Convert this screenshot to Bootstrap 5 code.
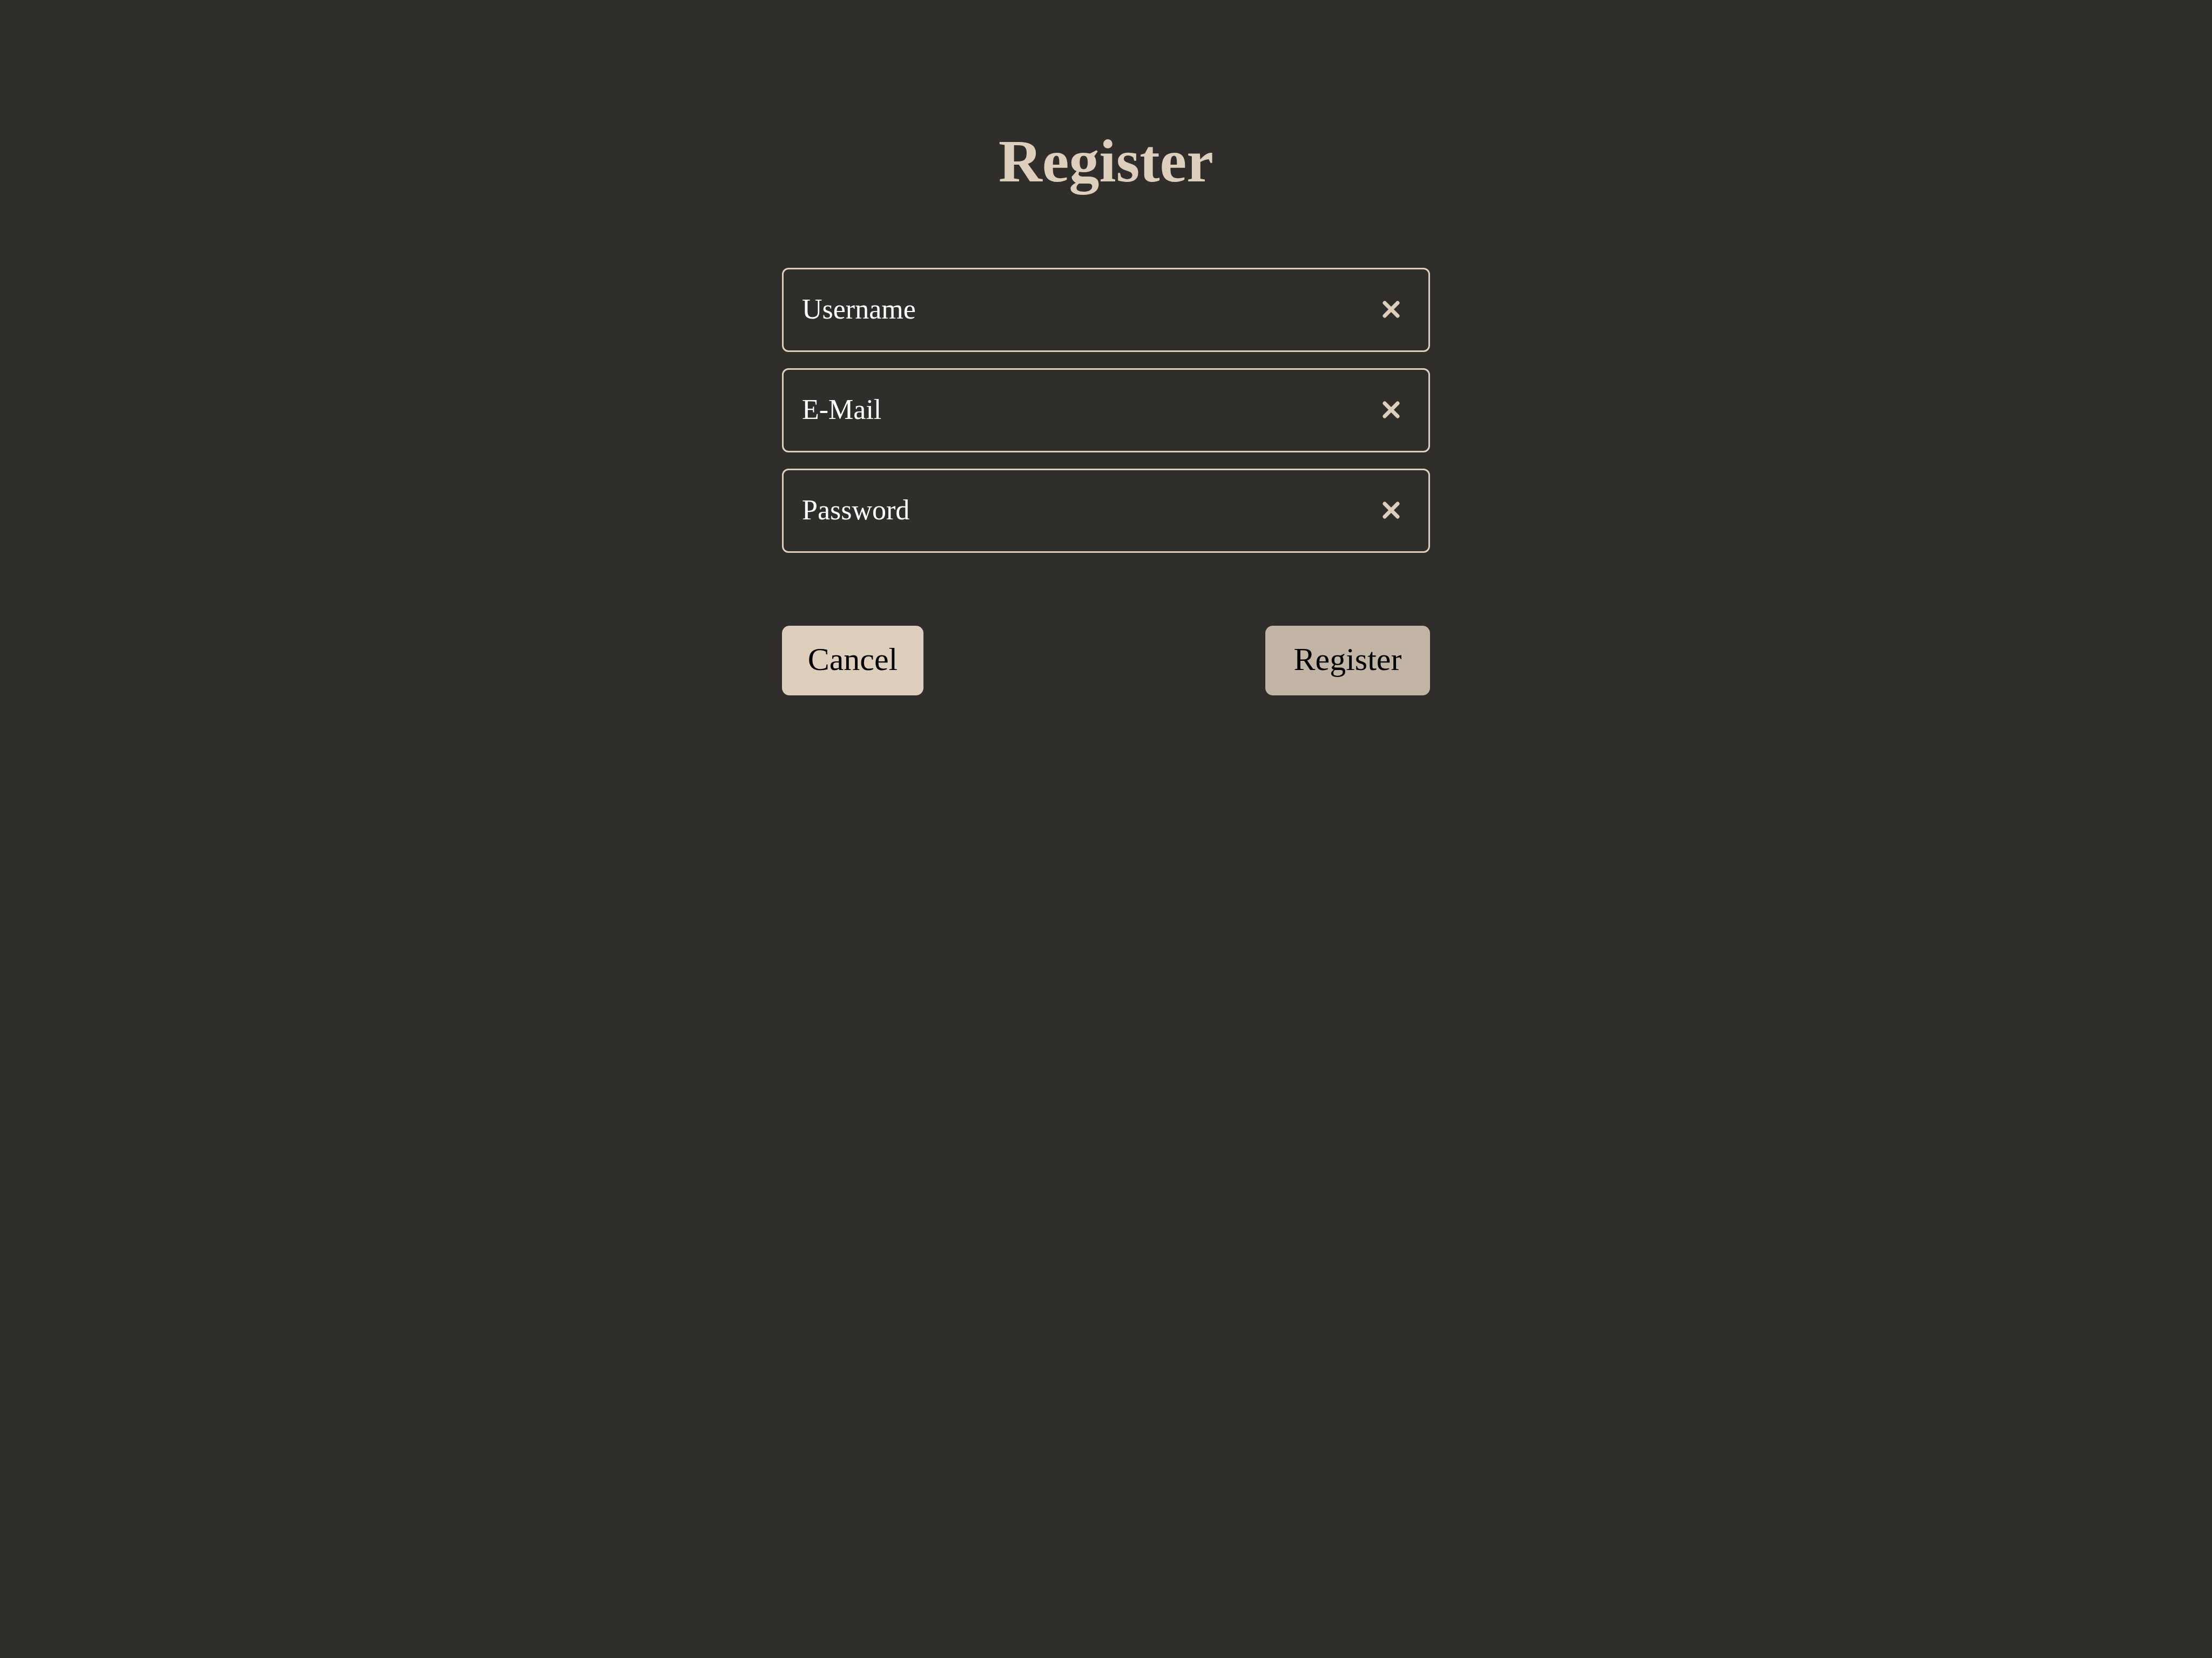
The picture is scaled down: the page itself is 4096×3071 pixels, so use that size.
<!DOCTYPE html>
<html lang="en">
<head>
<meta charset="utf-8">
<meta name="viewport" content="width=device-width, initial-scale=1">
<title>Register</title>
<link href="https://cdn.jsdelivr.net/npm/bootstrap@5.3.0/dist/css/bootstrap.min.css" rel="stylesheet">
<style>
  :root { --ink: #302e2a; --sand: #decfbc; --sand-dim: #c2b5a5; }
  body { background: var(--ink); color: #fff; font-family: "Liberation Serif", serif; }
  .signup { max-width: 1200px; padding-top: 228px; }
  .signup-title { color: var(--sand); font-size: 112px; line-height: 140px; margin-bottom: 128px; }
  .field-list { gap: 30px; }
  .field-box { height: 156px; border: 3px solid var(--sand); border-radius: 12px; padding: 0 38px 2px 34px; }
  .field-box label, .field-box .form-control { font-size: 52px; line-height: 60px; }
  .field-box .form-control { color: #fff; background: transparent; box-shadow: none; }
  .clear-btn { width: 62px; height: 62px; color: var(--sand); }
  .actions { margin-top: 135px; }
  .action-btn {
    --bs-btn-bg: var(--sand); --bs-btn-color: #000;
    --bs-btn-hover-bg: var(--sand-dim); --bs-btn-hover-color: #000;
    --bs-btn-disabled-bg: var(--sand-dim); --bs-btn-disabled-color: #000;
    --bs-btn-disabled-opacity: 1;
    height: 129px; min-width: 262px; padding: 0 0 6px; border: 0; border-radius: 14px;
    font-size: 60px; line-height: 72px;
  }
  .action-wide { min-width: 305px; }
</style>
</head>
<body>
<main class="signup w-100 mx-auto">
  <h1 class="signup-title text-center fw-bold">Register</h1>
  <form>
    <div class="field-list d-flex flex-column">
      <div class="field-box d-flex align-items-center">
        <label class="flex-shrink-0 text-nowrap" for="username">Username</label>
        <input class="form-control border-0" id="username" type="text">
        <button class="clear-btn btn border-0 p-0 flex-shrink-0 d-flex align-items-center justify-content-center" type="button" aria-label="Clear username">
          <svg width="32" height="32" viewBox="0 0 32 32" fill="none" stroke="currentColor" stroke-width="7" stroke-linecap="round"><path d="M4 4L28 28M28 4L4 28"/></svg>
        </button>
      </div>
      <div class="field-box d-flex align-items-center">
        <label class="flex-shrink-0 text-nowrap" for="email">E-Mail</label>
        <input class="form-control border-0" id="email" type="email">
        <button class="clear-btn btn border-0 p-0 flex-shrink-0 d-flex align-items-center justify-content-center" type="button" aria-label="Clear e-mail">
          <svg width="32" height="32" viewBox="0 0 32 32" fill="none" stroke="currentColor" stroke-width="7" stroke-linecap="round"><path d="M4 4L28 28M28 4L4 28"/></svg>
        </button>
      </div>
      <div class="field-box d-flex align-items-center">
        <label class="flex-shrink-0 text-nowrap" for="password">Password</label>
        <input class="form-control border-0" id="password" type="password">
        <button class="clear-btn btn border-0 p-0 flex-shrink-0 d-flex align-items-center justify-content-center" type="button" aria-label="Clear password">
          <svg width="32" height="32" viewBox="0 0 32 32" fill="none" stroke="currentColor" stroke-width="7" stroke-linecap="round"><path d="M4 4L28 28M28 4L4 28"/></svg>
        </button>
      </div>
    </div>
    <div class="actions d-flex justify-content-between">
      <button class="action-btn btn" type="button">Cancel</button>
      <button class="action-btn action-wide btn" type="submit" disabled>Register</button>
    </div>
  </form>
</main>
<script src="https://cdn.jsdelivr.net/npm/bootstrap@5.3.0/dist/js/bootstrap.bundle.min.js"></script>
</body>
</html>
